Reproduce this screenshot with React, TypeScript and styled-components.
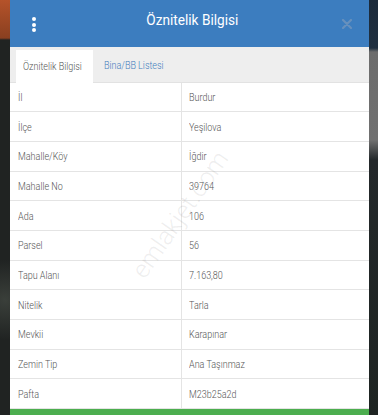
import React from 'react';
import styled, { createGlobalStyle } from 'styled-components';

const GlobalStyle = createGlobalStyle`
  html, body {
    margin: 0;
    padding: 0;
    height: 100%;
    overflow: hidden;
  }
  body {
    font-family: Roboto, "Liberation Sans", Arial, sans-serif;
    background: #1c1f1e;
  }
`;

// dimmed map photo behind the dialog
const Backdrop = styled.div`
  width: 378px;
  height: 415px;
  overflow: hidden;
  background:
    linear-gradient(180deg, #b5532a 0px, #8a4020 38px, transparent 40px) left top / 12px 100% no-repeat,
    linear-gradient(180deg, #1b2a3a 0px, #203040 48px, #6c6c6c 52px, #707070 140px, #23282a 160px, #1e2422 100%) right top / 12px 100% no-repeat,
    radial-gradient(circle at 5px 300px, #3a3f3a, transparent 40px),
    #202322;
  display: flex;
  justify-content: center;
`;

const Dialog = styled.div`
  width: 359px;
  margin-left: 1px;
  display: flex;
  flex-direction: column;
  background: #ffffff;
  position: relative;
`;

// the shot is a little narrow horizontally, so glyphs are squeezed
const Squeezed = styled.span<{ $scale?: number; $center?: boolean }>`
  display: inline-block;
  white-space: nowrap;
  transform: scaleX(${(p) => p.$scale ?? 0.9});
  transform-origin: ${(p) => (p.$center ? 'center' : 'left')} center;
`;

const Header = styled.div`
  height: 48px;
  background: #3c7dbf;
  display: flex;
  align-items: center;
  padding: 0 14px 0 20px;
  box-sizing: border-box;
`;

const MenuButton = styled.div`
  width: 8px;
  display: flex;
  flex-direction: column;
  align-items: center;
  gap: 1.5px;
  margin-top: 3px;
`;

const Dot = styled.span`
  width: 4px;
  height: 4px;
  border-radius: 50%;
  background: #ffffff;
`;

const Title = styled.h1`
  flex: 1;
  margin: -7px 0 0;
  text-align: center;
  color: #ffffff;
  font-size: 15.5px;
  font-weight: 400;
  padding-left: 6px;
`;

const CloseButton = styled.div`
  width: 12px;
  height: 12px;
  margin-top: 1px;
  margin-right: 2px;
  display: flex;
  align-items: center;
  justify-content: center;
`;

const TabBar = styled.div`
  height: 37px;
  background: #eeeeee;
  display: flex;
  align-items: flex-end;
  padding-left: 6px;
  gap: 3px;
  box-sizing: border-box;
  border-bottom: 1px solid #e2e2e2;
`;

const Tab = styled.div<{ $active?: boolean }>`
  height: 33px;
  width: ${(p) => (p.$active ? '77px' : 'auto')};
  box-sizing: border-box;
  display: flex;
  align-items: center;
  padding: 1px 0 0 ${(p) => (p.$active ? '7px' : '8px')};
  font-size: 10px;
  font-weight: 300;
  color: ${(p) => (p.$active ? '#555555' : '#3f7dbd')};
  background: ${(p) => (p.$active ? '#ffffff' : 'transparent')};
  margin-bottom: ${(p) => (p.$active ? '-1px' : '0')};
`;

const Table = styled.div`
  display: grid;
  grid-template-columns: 171px 1fr;
`;

const Cell = styled.div<{ $right?: boolean }>`
  height: 29.7px;
  box-sizing: border-box;
  border-bottom: 1px solid #e4e4e4;
  border-left: ${(p) => (p.$right ? '1px solid #e4e4e4' : 'none')};
  display: flex;
  align-items: center;
  padding: 1px 0 0 ${(p) => (p.$right ? '7px' : '8px')};
  font-size: 10px;
  font-weight: 300;
  color: #555555;
`;

const Footer = styled.div`
  height: 6px;
  background: #4cae4f;
`;

const Watermark = styled.div`
  position: absolute;
  left: 96px;
  top: 200px;
  transform: rotate(-55deg);
  font-size: 25px;
  font-weight: 300;
  color: rgba(120, 120, 120, 0.13);
  pointer-events: none;
  white-space: nowrap;
`;

const rows: [string, string][] = [
  ['İl', 'Burdur'],
  ['İlçe', 'Yeşilova'],
  ['Mahalle/Köy', 'İğdir'],
  ['Mahalle No', '39764'],
  ['Ada', '106'],
  ['Parsel', '56'],
  ['Tapu Alanı', '7.163,80'],
  ['Nitelik', 'Tarla'],
  ['Mevkii', 'Karapınar'],
  ['Zemin Tip', 'Ana Taşınmaz'],
  ['Pafta', 'M23b25a2d'],
];

const App: React.FC = () => {
  return (
    <>
      <GlobalStyle />
      <Backdrop>
        <Dialog>
          <Header>
            <MenuButton>
              <Dot />
              <Dot />
              <Dot />
            </MenuButton>
            <Title>
              <Squeezed $scale={0.88} $center>Öznitelik Bilgisi</Squeezed>
            </Title>
            <CloseButton>
              <svg width="10" height="10" viewBox="0 0 10 10">
                <path d="M1 1 L9 9 M9 1 L1 9" stroke="#6790bd" strokeWidth="2.2" strokeLinecap="round" />
              </svg>
            </CloseButton>
          </Header>
          <TabBar>
            <Tab $active><Squeezed>Öznitelik Bilgisi</Squeezed></Tab>
            <Tab><Squeezed>Bina/BB Listesi</Squeezed></Tab>
          </TabBar>
          <Table>
            {rows.map(([k, v]) => (
              <React.Fragment key={k}>
                <Cell><Squeezed>{k}</Squeezed></Cell>
                <Cell $right><Squeezed>{v}</Squeezed></Cell>
              </React.Fragment>
            ))}
          </Table>
          <Footer />
          <Watermark>emlakjet.com</Watermark>
        </Dialog>
      </Backdrop>
    </>
  );
};

export default App;
